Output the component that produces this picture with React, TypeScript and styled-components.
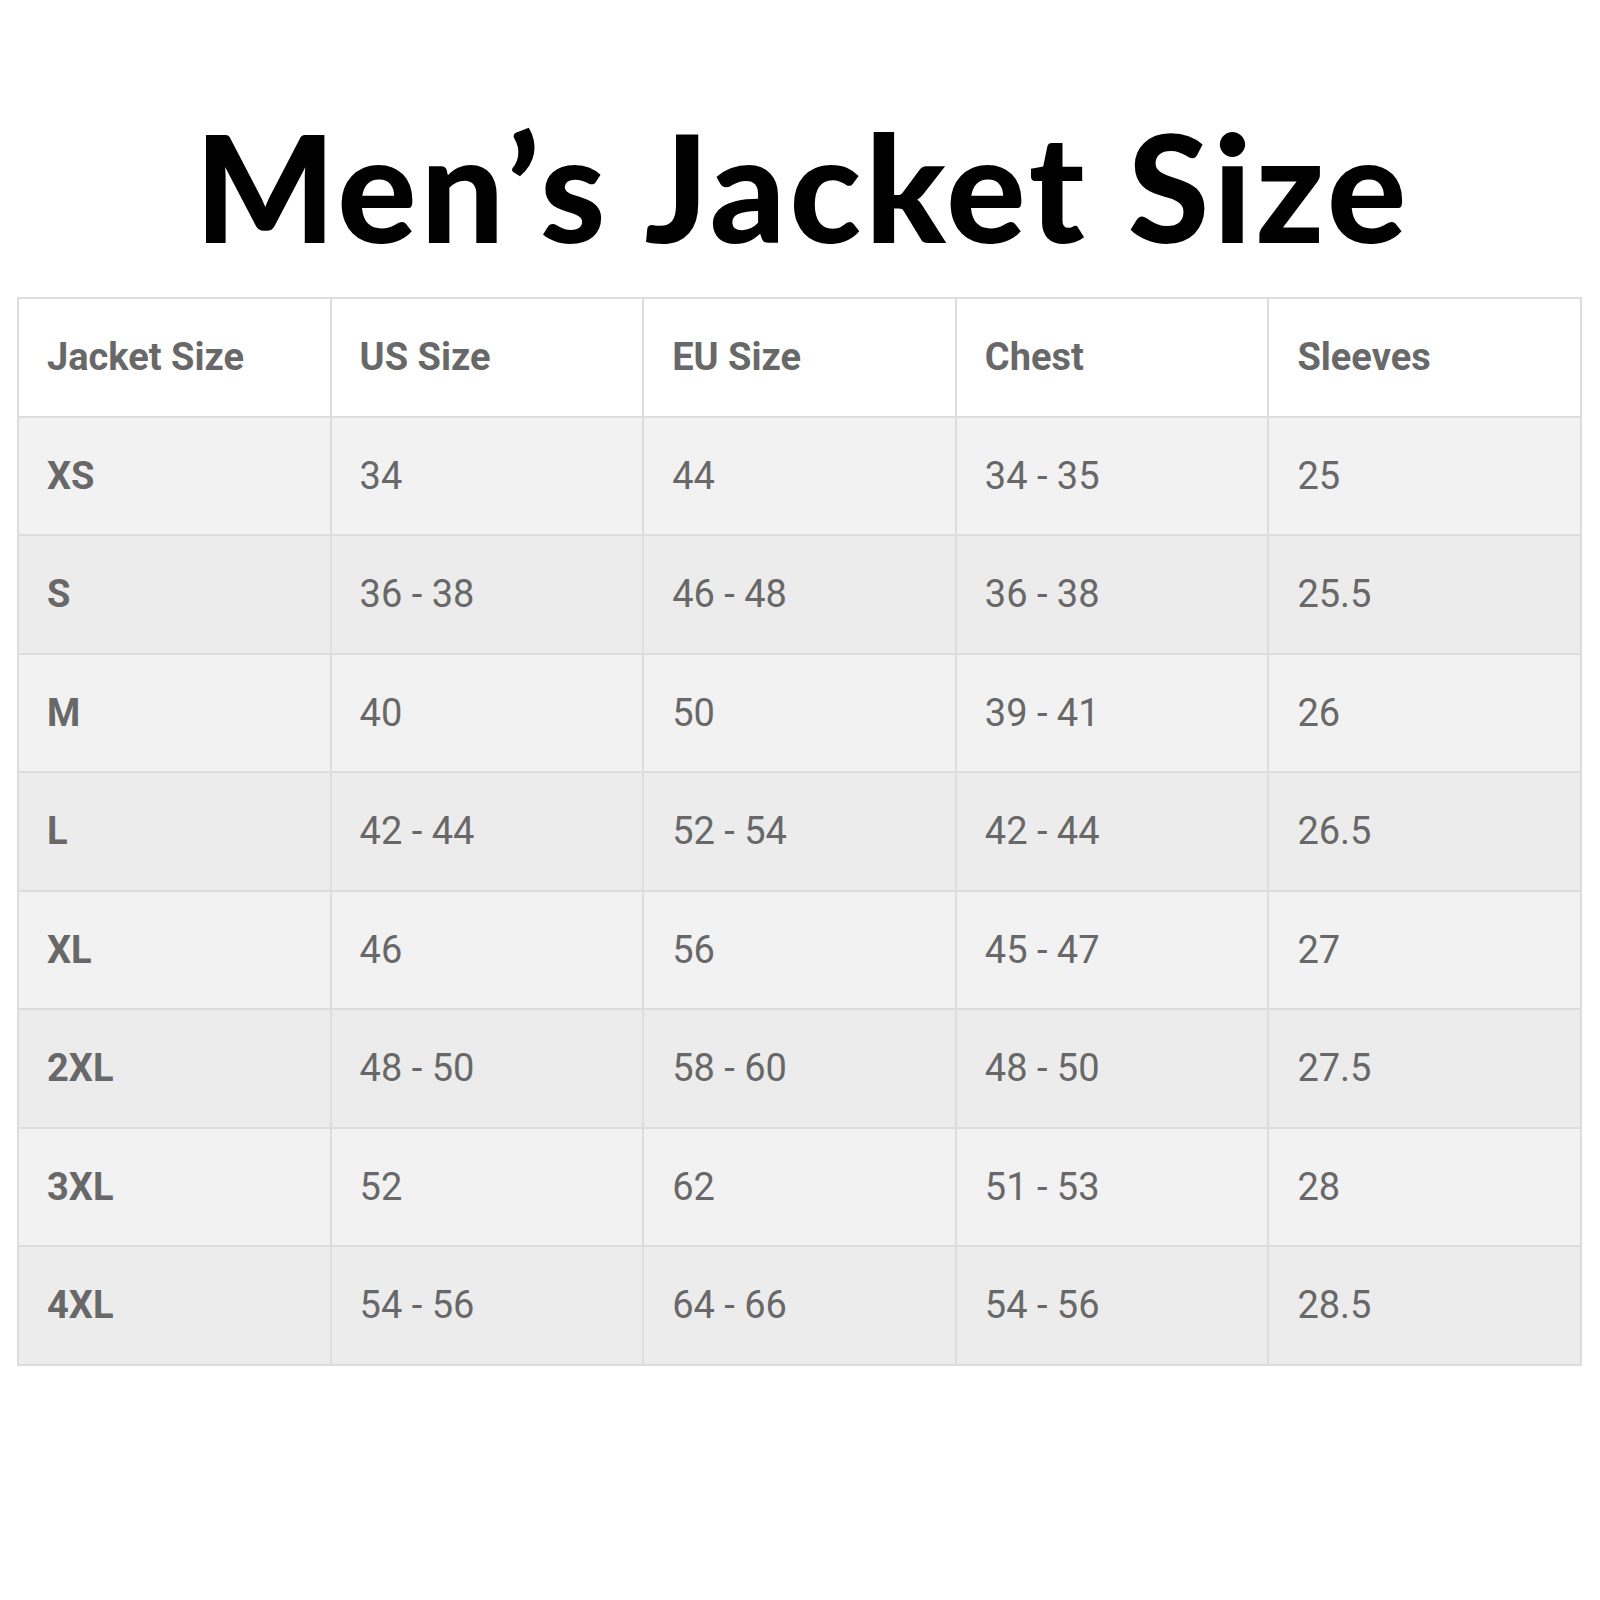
import React from 'react';
import styled, { createGlobalStyle } from 'styled-components';

const GlobalStyle = createGlobalStyle`
  html, body {
    margin: 0;
    padding: 0;
    background: #ffffff;
  }
`;

const Page = styled.div`
  width: 1600px;
  height: 1600px;
  box-sizing: border-box;
  padding: 112px 18px 0 17px;
  background: #ffffff;
`;

const Title = styled.h1`
  margin: 0 0 37px;
  padding-left: 6px;
  font-family: Lato, 'Noto Sans', sans-serif;
  font-weight: 900;
  font-size: 148px;
  line-height: 1;
  text-align: center;
  color: #000000;
  letter-spacing: 4px;
`;

const SizeTable = styled.table`
  width: 100%;
  border-collapse: collapse;
  table-layout: fixed;
  border: 2px solid #dddddd;
  font-family: Roboto, 'Liberation Sans', sans-serif;
  font-size: 38px;
  color: #686868;
`;

const HeadCell = styled.th`
  height: 116.5px;
  padding: 0 0 0 28px;
  border: 2px solid #dddddd;
  background: #ffffff;
  text-align: left;
  font-weight: 700;
`;

const Row = styled.tr<{ $alt: boolean }>`
  background: ${(props) => (props.$alt ? '#ececec' : '#f2f2f2')};
`;

const Cell = styled.td<{ $strong?: boolean }>`
  height: 116.5px;
  padding: 0 0 0 28px;
  border: 2px solid #dddddd;
  font-weight: ${(props) => (props.$strong ? 700 : 400)};
`;

const headers = ['Jacket Size', 'US Size', 'EU Size', 'Chest', 'Sleeves'];

const rows = [
  ['XS', '34', '44', '34 - 35', '25'],
  ['S', '36 - 38', '46 - 48', '36 - 38', '25.5'],
  ['M', '40', '50', '39 - 41', '26'],
  ['L', '42 - 44', '52 - 54', '42 - 44', '26.5'],
  ['XL', '46', '56', '45 - 47', '27'],
  ['2XL', '48 - 50', '58 - 60', '48 - 50', '27.5'],
  ['3XL', '52', '62', '51 - 53', '28'],
  ['4XL', '54 - 56', '64 - 66', '54 - 56', '28.5'],
];

const App = () => {
  return (
    <>
      <GlobalStyle />
      <Page>
        <Title>Men’s Jacket Size</Title>
        <SizeTable>
          <thead>
            <tr>
              {headers.map((h) => (
                <HeadCell key={h}>{h}</HeadCell>
              ))}
            </tr>
          </thead>
          <tbody>
            {rows.map((row, i) => (
              <Row key={row[0]} $alt={i % 2 === 1}>
                {row.map((value, j) => (
                  <Cell key={j} $strong={j === 0}>
                    {value}
                  </Cell>
                ))}
              </Row>
            ))}
          </tbody>
        </SizeTable>
      </Page>
    </>
  );
};

export default App;
